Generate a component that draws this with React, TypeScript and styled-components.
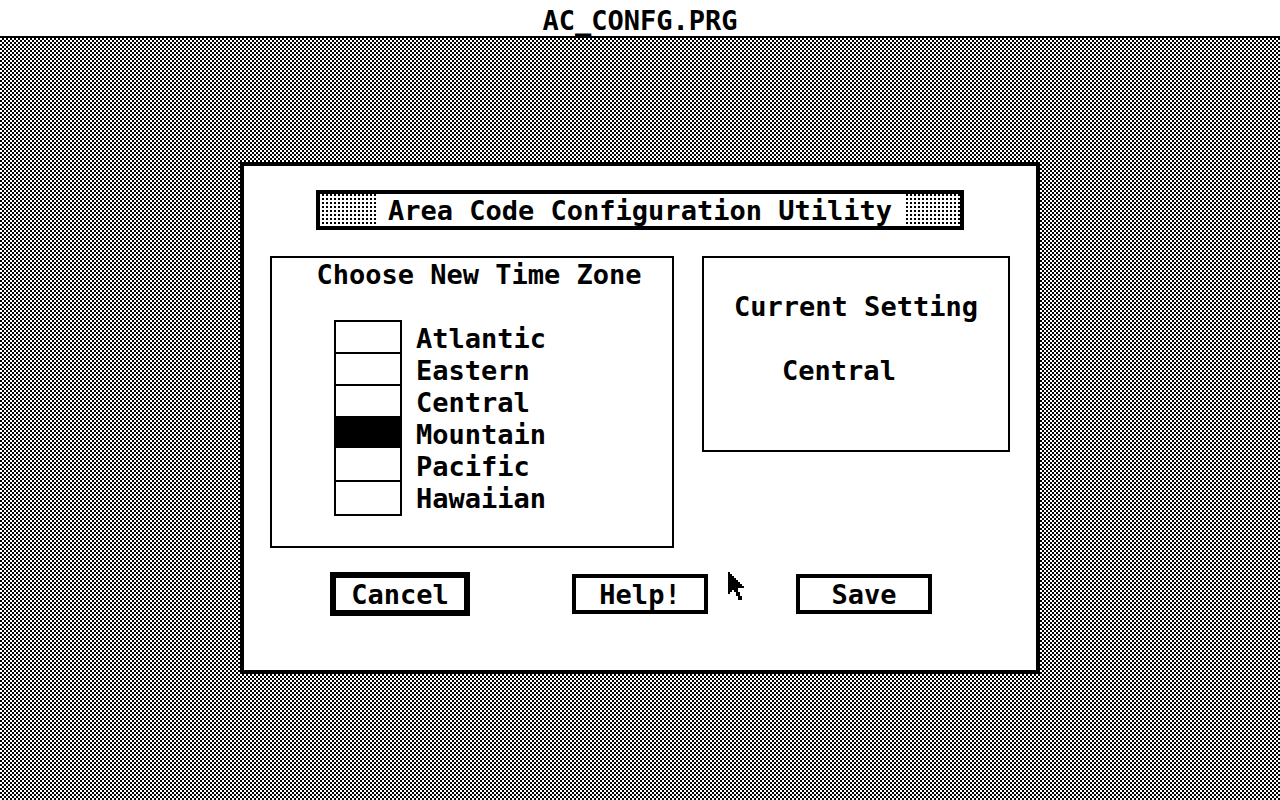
import React, { useState } from "react";
import styled, { createGlobalStyle } from "styled-components";

const GlobalStyle = createGlobalStyle`
  *, *::before, *::after { box-sizing: border-box; }
  html, body { margin: 0; height: 100%; }
  #root { min-height: 100%; display: flex; flex-direction: column; }
  body, button, input {
    font-family: "DejaVu Sans Mono", monospace;
    font-size: 27px;
    font-weight: 700;
    line-height: 34px;
    color: #000;
  }
`;

const MenuBar = styled.header`
  height: 38px;
  padding-top: 4px;
  background: #fff;
  border-bottom: 2px solid #000;
  text-align: center;
`;

const Desktop = styled.main`
  flex: 1;
  display: flex;
  align-items: center;
  justify-content: center;
  padding-bottom: 2px;
  background: repeating-conic-gradient(#000 0 25%, #fff 0 50%) 0 0 / 4px 4px;
`;

const Dialog = styled.form`
  position: relative;
  width: 800px;
  max-width: 100%;
  padding: 24px 26px 54px;
  background: #fff;
  border: 4px solid #000;
`;

const TitleBar = styled.div`
  display: flex;
  justify-content: center;
  height: 40px;
  margin: 0 46px 26px;
  border: 4px solid #000;
  background: conic-gradient(#000 0 25%, #fff 0) 0 0 / 4px 4px;
`;

const Title = styled.h1`
  margin: 0;
  padding: 0 12px;
  background: #fff;
  font-size: inherit;
  white-space: nowrap;
`;

const Panels = styled.div`
  display: flex;
  align-items: flex-start;
  justify-content: space-between;
  margin-bottom: 24px;
`;

const ZonePanel = styled.fieldset`
  flex: 0 1 404px;
  min-width: 0;
  margin: 0;
  padding: 0 0 30px;
  border: 2px solid #000;
`;

const PanelTitle = styled.h2`
  margin: 0;
  font-size: inherit;
  text-align: center;
`;

const ZoneTitle = styled(PanelTitle)`
  padding: 0 0 28px 14px;
`;

const ZoneList = styled.div`
  padding-left: 62px;
`;

const ZoneRow = styled.label`
  display: flex;
  gap: 14px;
  height: 32px;

  &:last-child { height: 36px; }
`;

const ZoneRadio = styled.input`
  appearance: none;
  width: 68px;
  height: 100%;
  margin: 0;
  border: 2px solid #000;
  border-bottom-width: 0;
  background: #fff;

  ${ZoneRow}:last-child & { border-bottom-width: 2px; }
  &:checked { background: #000; }
  ${ZoneRow}:has(&:checked) + ${ZoneRow} & { border-top-width: 0; }
`;

const ZoneName = styled.span`
  padding-top: 2px;
`;

const SettingPanel = styled.section`
  flex: 0 1 308px;
  padding: 32px 0 62px;
  border: 2px solid #000;
  text-align: center;
`;

const Setting = styled.output`
  display: block;
  padding: 30px 34px 0 0;
`;

const Actions = styled.div`
  display: flex;
  align-items: center;
  padding-left: 60px;
`;

const ActionButton = styled.button<{ $default?: boolean }>`
  width: ${(p) => (p.$default ? 140 : 136)}px;
  height: ${(p) => (p.$default ? 44 : 40)}px;
  padding: 0;
  background: #fff;
  border: ${(p) => (p.$default ? 6 : 4)}px solid #000;

  & + & { margin-left: 88px; }
  &:nth-child(2) { margin-left: 102px; }
`;

const Pointer = styled.svg`
  position: absolute;
  left: 484px;
  top: 406px;
  width: 16px;
  height: 28px;
  pointer-events: none;
`;

const zones = ["Atlantic", "Eastern", "Central", "Mountain", "Pacific", "Hawaiian"];

export default function App() {
  const [zone, setZone] = useState("Mountain");
  const [current, setCurrent] = useState("Central");

  return (
    <>
      <GlobalStyle />
      <MenuBar>AC_CONFG.PRG</MenuBar>
      <Desktop>
        <Dialog
          onSubmit={(e) => {
            e.preventDefault();
            setCurrent(zone);
          }}
        >
          <TitleBar>
            <Title>Area Code Configuration Utility</Title>
          </TitleBar>
          <Panels>
            <ZonePanel aria-labelledby="zone-title">
              <ZoneTitle id="zone-title">Choose New Time Zone</ZoneTitle>
              <ZoneList>
                {zones.map((name) => (
                  <ZoneRow key={name}>
                    <ZoneRadio
                      type="radio"
                      name="zone"
                      checked={zone === name}
                      onChange={() => setZone(name)}
                    />
                    <ZoneName>{name}</ZoneName>
                  </ZoneRow>
                ))}
              </ZoneList>
            </ZonePanel>
            <SettingPanel>
              <PanelTitle>Current Setting</PanelTitle>
              <Setting>{current}</Setting>
            </SettingPanel>
          </Panels>
          <Actions>
            <ActionButton type="button" $default onClick={() => setZone(current)}>
              Cancel
            </ActionButton>
            <ActionButton type="button">Help!</ActionButton>
            <ActionButton type="submit">Save</ActionButton>
          </Actions>
          <Pointer viewBox="0 0 8 14" shapeRendering="crispEdges" aria-hidden="true">
            <path d="M0 0h1v1h1v1h1v1h1v1h1v1h1v1h1v1h1v1h-3v2h1v2h1v2h-2v-2h-1v-2h-1v-1h-1v1h-1v1h-1z" />
          </Pointer>
        </Dialog>
      </Desktop>
    </>
  );
}
